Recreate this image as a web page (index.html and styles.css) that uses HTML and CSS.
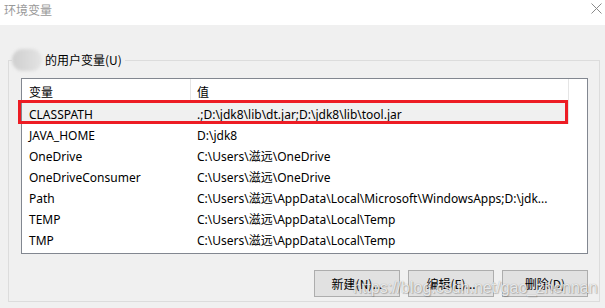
FILE: index.html
```html
<!DOCTYPE html>
<html lang="zh-CN">
<head>
<meta charset="utf-8">
<title>环境变量</title>
<link rel="stylesheet" href="styles.css">
</head>
<body>
<div class="window">
  <div class="titlebar">
    <span class="title">环境变量</span>
    <svg class="close" width="11" height="11" viewBox="0 0 11 11"><path d="M0.5 0.5 L10.5 10.5 M10.5 0.5 L0.5 10.5" stroke="#8a8a8a" stroke-width="1" fill="none"/></svg>
  </div>
  <div class="content">
    <fieldset class="group">
      <legend class="legend"><span class="blob"></span><span class="legend-text">的用户变量(U)</span></legend>
      <div class="list">
        <div class="row head">
          <div class="c1">变量</div>
          <div class="c2 last">值</div>
        </div>
        <div class="row sel">
          <div class="c1">CLASSPATH</div>
          <div class="c2 last">.;D:\jdk8\lib\dt.jar;D:\jdk8\lib\tool.jar</div>
        </div>
        <div class="row">
          <div class="c1">JAVA_HOME</div>
          <div class="c2">D:\jdk8</div>
        </div>
        <div class="row">
          <div class="c1">OneDrive</div>
          <div class="c2">C:\Users\滋远\OneDrive</div>
        </div>
        <div class="row">
          <div class="c1">OneDriveConsumer</div>
          <div class="c2">C:\Users\滋远\OneDrive</div>
        </div>
        <div class="row">
          <div class="c1">Path</div>
          <div class="c2">C:\Users\滋远\AppData\Local\Microsoft\WindowsApps;D:\jdk...</div>
        </div>
        <div class="row">
          <div class="c1">TEMP</div>
          <div class="c2">C:\Users\滋远\AppData\Local\Temp</div>
        </div>
        <div class="row">
          <div class="c1">TMP</div>
          <div class="c2">C:\Users\滋远\AppData\Local\Temp</div>
        </div>
        <div class="redbox"></div>
      </div>
      <div class="buttons">
        <button class="btn">新建(N)...</button>
        <button class="btn">编辑(E)...</button>
        <button class="btn">删除(D)</button>
      </div>
    </fieldset>
    <div class="watermark">https://blog.csdn.net/gao_zhennan</div>
  </div>
</div>
</body>
</html>
```

FILE: styles.css
```css
html, body {
  margin: 0;
  padding: 0;
}
body {
  width: 605px;
  height: 308px;
  overflow: hidden;
  background: #f0f0f0;
  font-family: "Noto Sans", "Noto Sans CJK SC", sans-serif;
  font-size: 12px;
  color: #000;
}
.window {
  width: 605px;
  height: 308px;
  display: flex;
  flex-direction: column;
  overflow: hidden;
}
.titlebar {
  height: 25px;
  background: #fff;
  display: flex;
  align-items: flex-start;
  justify-content: space-between;
  padding: 0 3px 0 4px;
  box-sizing: border-box;
  flex-shrink: 0;
}
.title {
  color: #999;
  font-size: 12px;
  line-height: 19px;
  font-family: "Noto Sans CJK SC", sans-serif;
}
.close {
  margin-top: 3px;
}
.content {
  position: relative;
  flex: 1;
  min-height: 0;
  padding: 0 5px 0 8px;
}
.group {
  margin: 23px 0 0 0;
  padding: 6px 11px 4px 12px;
  border: 1px solid #dcdcdc;
  min-width: 0;
}
.legend {
  margin-left: -9px;
  padding: 0 3px 0 0;
  display: flex;
  align-items: center;
  height: 24px;
}
.blob {
  display: inline-block;
  width: 30px;
  height: 22px;
  border-radius: 11px;
  background: linear-gradient(90deg, #cfcfcf 0%, #d9d9d9 50%, #e4e4e4 100%);
  filter: blur(1.5px);
  margin-right: 3px;
}
.legend-text {
  font-family: "Noto Sans CJK SC", sans-serif;
  line-height: 24px;
}
.list {
  position: relative;
  height: 174px;
  background: #fff;
  border: 1px solid #828790;
}
.row {
  display: flex;
  height: 21px;
  width: 547px;
  align-items: center;
  white-space: nowrap;
}
.row.head {
  height: 24px;
  font-family: "Noto Sans CJK SC", sans-serif;
}
.c1 {
  width: 161px;
  padding-left: 7px;
  flex-shrink: 0;
  align-self: stretch;
  display: flex;
  align-items: center;
  padding-top: 1px;
}
.head .c1 {
  border-right: 1px solid #e5e5e5;
}
.c2 {
  flex: 1;
  padding-left: 6px;
  overflow: hidden;
  align-self: stretch;
  display: flex;
  align-items: center;
  padding-top: 1px;
  margin-left: 1px;
}
.head .c1 + .c2 {
  margin-left: 0;
}
.c2.last {
  border-right: 1px solid #e5e5e5;
}
.row.sel {
  background: #f0f0f0;
}
.redbox {
  position: absolute;
  left: -4px;
  top: 21px;
  width: 544px;
  height: 18px;
  border: 3px solid #ed1c24;
  pointer-events: none;
}
.buttons {
  display: flex;
  justify-content: flex-end;
  gap: 8px;
  margin-top: 16px;
}
.btn {
  width: 86px;
  height: 27px;
  background: #e1e1e1;
  border: 1px solid #adadad;
  font-family: "Noto Sans CJK SC", sans-serif;
  font-size: 12px;
  color: #000;
  padding: 0;
  margin: 0;
}
.watermark {
  position: absolute;
  left: 353px;
  top: 254px;
  font-family: "Liberation Sans", sans-serif;
  font-size: 16px;
  line-height: 18px;
  color: rgba(255, 255, 255, 0.8);
  text-shadow: 0 0 1px rgba(0, 0, 0, 0.35), 1px 1px 1px rgba(0, 0, 0, 0.2);
  pointer-events: none;
}
```
